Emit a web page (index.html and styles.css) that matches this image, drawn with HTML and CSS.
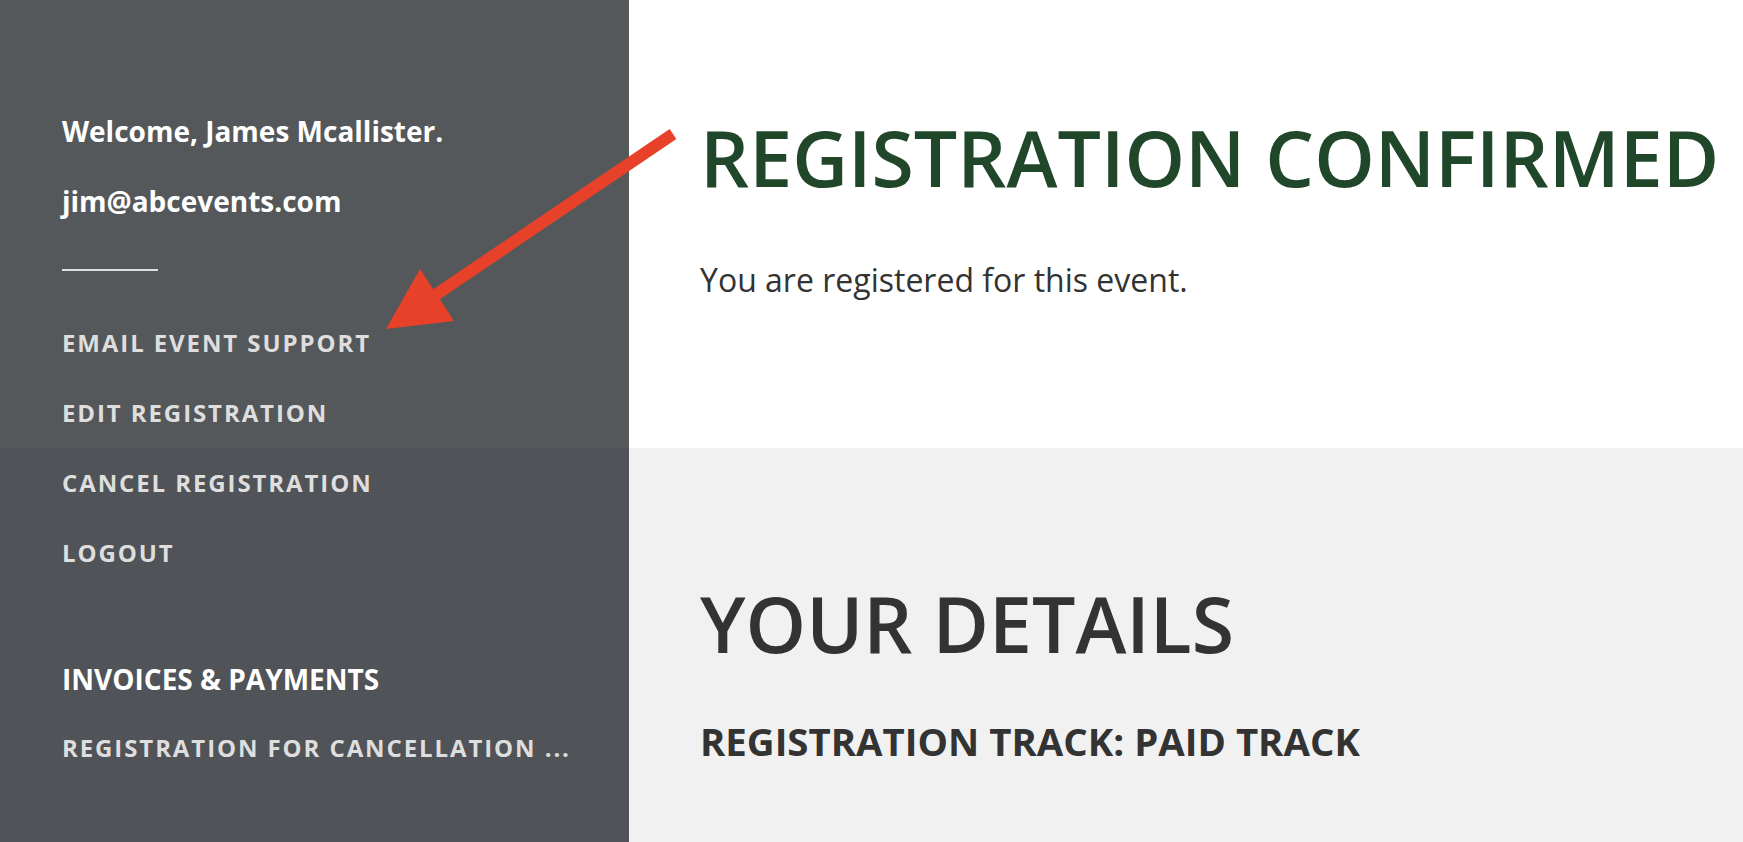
FILE: index.html
```html
<!DOCTYPE html>
<html lang="en">
<head>
    <meta charset="UTF-8">
    <meta name="viewport" content="width=device-width, initial-scale=1.0">
    <title>Registration Confirmed</title>
    <link rel="stylesheet" href="styles.css">
</head>
<body>
    <div class="page">
        <aside class="sidebar">
            <div class="user-name">Welcome, James Mcallister.</div>
            <div class="user-email">jim@abcevents.com</div>
            <div class="divider"></div>

            <nav class="side-nav">
                <a href="#">Email Event Support</a>
                <a href="#">Edit Registration</a>
                <a href="#">Cancel Registration</a>
                <a href="#">Logout</a>
            </nav>

            <div class="side-heading">Invoices &amp; Payments</div>
            <nav class="side-nav sub">
                <a href="#">Registration for Cancellation ...</a>
            </nav>
        </aside>

        <main class="content">
            <section class="confirm">
                <h1>Registration Confirmed</h1>
                <p>You are registered for this event.</p>
            </section>

            <section class="details">
                <h2>Your Details</h2>
                <h3>Registration Track: Paid Track</h3>
            </section>
        </main>

        <!-- annotation arrow drawn over the screenshot -->
        <svg class="callout" width="700" height="360" viewBox="0 0 700 360">
            <line x1="673" y1="134" x2="428" y2="300" stroke="#e8412a" stroke-width="12" />
            <polygon points="386,329 420,269 454,321" fill="#e8412a" />
        </svg>
    </div>
</body>
</html>
```

FILE: styles.css
```css
body {
    margin: 0;
    padding: 0;
    font-family: "Open Sans", "Noto Sans", sans-serif;
    color: #333;
}

.page {
    position: relative;
    display: flex;
    height: 842px;
    overflow: hidden;
}

.sidebar {
    width: 629px;
    flex-shrink: 0;
    box-sizing: border-box;
    padding: 117px 0 0 62px;
    background: linear-gradient(to bottom, #55585b 448px, #505357 448px);
    color: #fff;
}

.user-name,
.user-email {
    font-size: 28px;
    font-weight: 700;
    line-height: 1;
}

.user-email {
    margin-top: 42px;
}

.divider {
    width: 96px;
    height: 2px;
    margin-top: 54px;
    background-color: #ddd;
}

.side-nav {
    display: flex;
    flex-direction: column;
    gap: 46px;
    margin-top: 60px;
}

.side-nav a {
    color: #dedede;
    text-decoration: none;
    text-transform: uppercase;
    font-size: 24px;
    font-weight: 700;
    letter-spacing: 1.9px;
    line-height: 1;
}

.side-heading {
    margin-top: 100px;
    font-size: 28px;
    font-weight: 700;
    line-height: 1;
    text-transform: uppercase;
}

.side-nav.sub {
    margin-top: 43px;
}

.content {
    flex: 1;
    display: flex;
    flex-direction: column;
}

.confirm {
    height: 448px;
    box-sizing: border-box;
    padding: 119px 0 0 71px;
    background-color: #fff;
}

.confirm h1 {
    margin: 0;
    font-size: 77px;
    font-weight: 600;
    line-height: 1;
    color: #21472b;
    text-transform: uppercase;
}

.confirm p {
    margin: 60px 0 0;
    font-size: 32px;
    line-height: 1.5;
}

.details {
    flex: 1;
    padding: 137px 0 0 71px;
    background-color: #f1f1f1;
}

.details h2 {
    margin: 0;
    font-size: 77px;
    font-weight: 600;
    line-height: 1;
    text-transform: uppercase;
}

.details h3 {
    margin: 60px 0 0;
    font-size: 38.4px;
    font-weight: 700;
    line-height: 1;
    text-transform: uppercase;
}

.callout {
    position: absolute;
    top: 0;
    left: 0;
    pointer-events: none;
}
```
